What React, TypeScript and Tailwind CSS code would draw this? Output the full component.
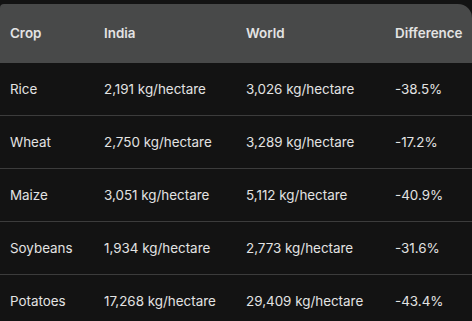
const rows = [
  ["Rice", "2,191 kg/hectare", "3,026 kg/hectare", "-38.5%"],
  ["Wheat", "2,750 kg/hectare", "3,289 kg/hectare", "-17.2%"],
  ["Maize", "3,051 kg/hectare", "5,112 kg/hectare", "-40.9%"],
  ["Soybeans", "1,934 kg/hectare", "2,773 kg/hectare", "-31.6%"],
  ["Potatoes", "17,268 kg/hectare", "29,409 kg/hectare", "-43.4%"],
];

const cols = ["w-[104px] pl-[10px]", "w-[142px]", "w-[149px]", "flex-1"];

export default function App() {
  return (
    <div
      className="w-[472px] h-[321px] overflow-hidden bg-[#131313] pt-[4px] text-[13.4px] text-[#e3e3e3]"
      style={{ fontFamily: "Inter, 'Noto Sans', sans-serif" }}
    >
      <div className="flex h-[59px] items-center bg-[#484949] rounded-tl-[4px] rounded-tr-[14px] font-semibold">
        {["Crop", "India", "World", "Difference"].map((h, i) => (
          <div key={h} className={cols[i] + " whitespace-nowrap"}>
            {h}
          </div>
        ))}
      </div>
      {rows.map((r) => (
        <div
          key={r[0]}
          className="flex h-[53px] items-center border-b border-[#3c3c3c]"
        >
          {r.map((c, i) => (
            <div key={i} className={cols[i] + " whitespace-nowrap"}>
              {c}
            </div>
          ))}
        </div>
      ))}
    </div>
  );
}
